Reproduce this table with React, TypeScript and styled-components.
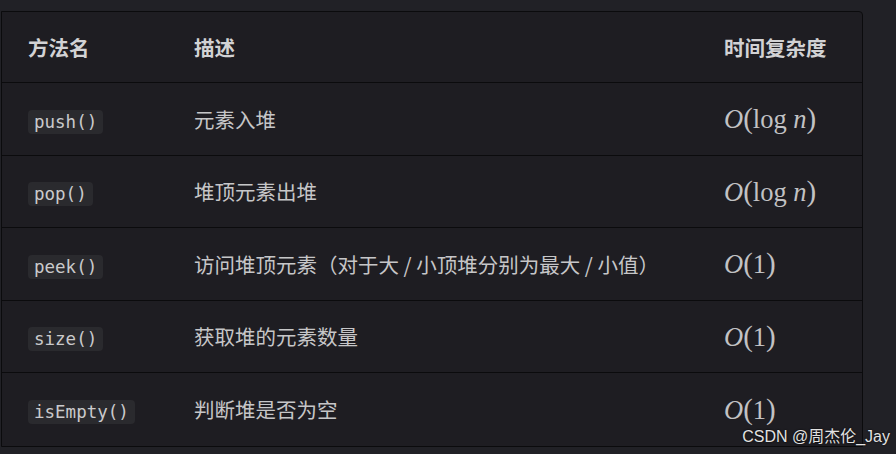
import React from 'react';
import styled, { createGlobalStyle } from 'styled-components';

const GlobalStyle = createGlobalStyle`
  html, body {
    margin: 0;
    padding: 0;
    background: #212126;
  }
  body {
    font-family: "Noto Sans CJK SC", "Noto Sans", sans-serif;
  }
`;

const Page = styled.div`
  position: relative;
  width: 896px;
  height: 454px;
  padding: 11px 0 0 1px;
  box-sizing: border-box;
  overflow: hidden;
`;

const Table = styled.table`
  width: 862px;
  border-collapse: separate;
  border-spacing: 0;
  background: #1e1d22;
  border: 1px solid #0b0b0d;
  border-radius: 0 4px 0 0;
  table-layout: fixed;
`;

const HeadCell = styled.th<{ $w?: number }>`
  width: ${(p) => (p.$w ? `${p.$w}px` : 'auto')};
  height: 71px;
  padding: 0 0 0 26px;
  text-align: left;
  font-size: 20.5px;
  font-weight: 700;
  color: #d2d2d4;
  border-bottom: 1px solid #0b0b0d;
  box-sizing: border-box;
`;

const Row = styled.tr<{ $last?: boolean }>`
  & > td {
    border-bottom: ${(p) => (p.$last ? 'none' : '1px solid #0b0b0d')};
  }
`;

const Cell = styled.td`
  height: 72.5px;
  padding: 0 0 0 26px;
  font-size: 20.5px;
  color: #c6c6c8;
  box-sizing: border-box;
  vertical-align: middle;
  white-space: nowrap;
`;

const Code = styled.code`
  display: inline-block;
  padding: 2px 6px;
  border-radius: 4px;
  background: #2a2a2e;
  color: #cacacc;
  font-family: "DejaVu Sans Mono", monospace;
  font-size: 17.5px;
  line-height: 20px;
`;

const Math = styled.span`
  font-family: "Liberation Serif", "DejaVu Serif", serif;
  font-size: 26.5px;
  color: #c2c2c4;
`;

const Var = styled.i`
  font-style: italic;
`;

const Paren = styled.span`
  font-size: 29px;
`;

const Watermark = styled.div`
  position: absolute;
  right: 6px;
  bottom: 7px;
  font-family: "Liberation Sans", "Noto Sans CJK SC", sans-serif;
  font-size: 16px;
  color: #e2e2e2;
  text-shadow: 0 0 2px #000;
`;

type Item = { name: string; desc: string; log: boolean };

const rows: Item[] = [
  { name: 'push()', desc: '元素入堆', log: true },
  { name: 'pop()', desc: '堆顶元素出堆', log: true },
  { name: 'peek()', desc: '访问堆顶元素（对于大 / 小顶堆分别为最大 / 小值）', log: false },
  { name: 'size()', desc: '获取堆的元素数量', log: false },
  { name: 'isEmpty()', desc: '判断堆是否为空', log: false },
];

const Complexity = ({ log }: { log: boolean }) => (
  <Math>
    <Var>O</Var>
    <Paren>(</Paren>
    {log ? (
      <>
        log <Var>n</Var>
      </>
    ) : (
      '1'
    )}
    <Paren>)</Paren>
  </Math>
);

export default function App() {
  return (
    <Page>
      <GlobalStyle />
      <Table>
        <thead>
          <tr>
            <HeadCell $w={166}>方法名</HeadCell>
            <HeadCell>描述</HeadCell>
            <HeadCell $w={164}>时间复杂度</HeadCell>
          </tr>
        </thead>
        <tbody>
          {rows.map((r, i) => (
            <Row key={r.name} $last={i === rows.length - 1}>
              <Cell>
                <Code>{r.name}</Code>
              </Cell>
              <Cell>{r.desc}</Cell>
              <Cell>
                <Complexity log={r.log} />
              </Cell>
            </Row>
          ))}
        </tbody>
      </Table>
      <Watermark>CSDN @周杰伦_Jay</Watermark>
    </Page>
  );
}
